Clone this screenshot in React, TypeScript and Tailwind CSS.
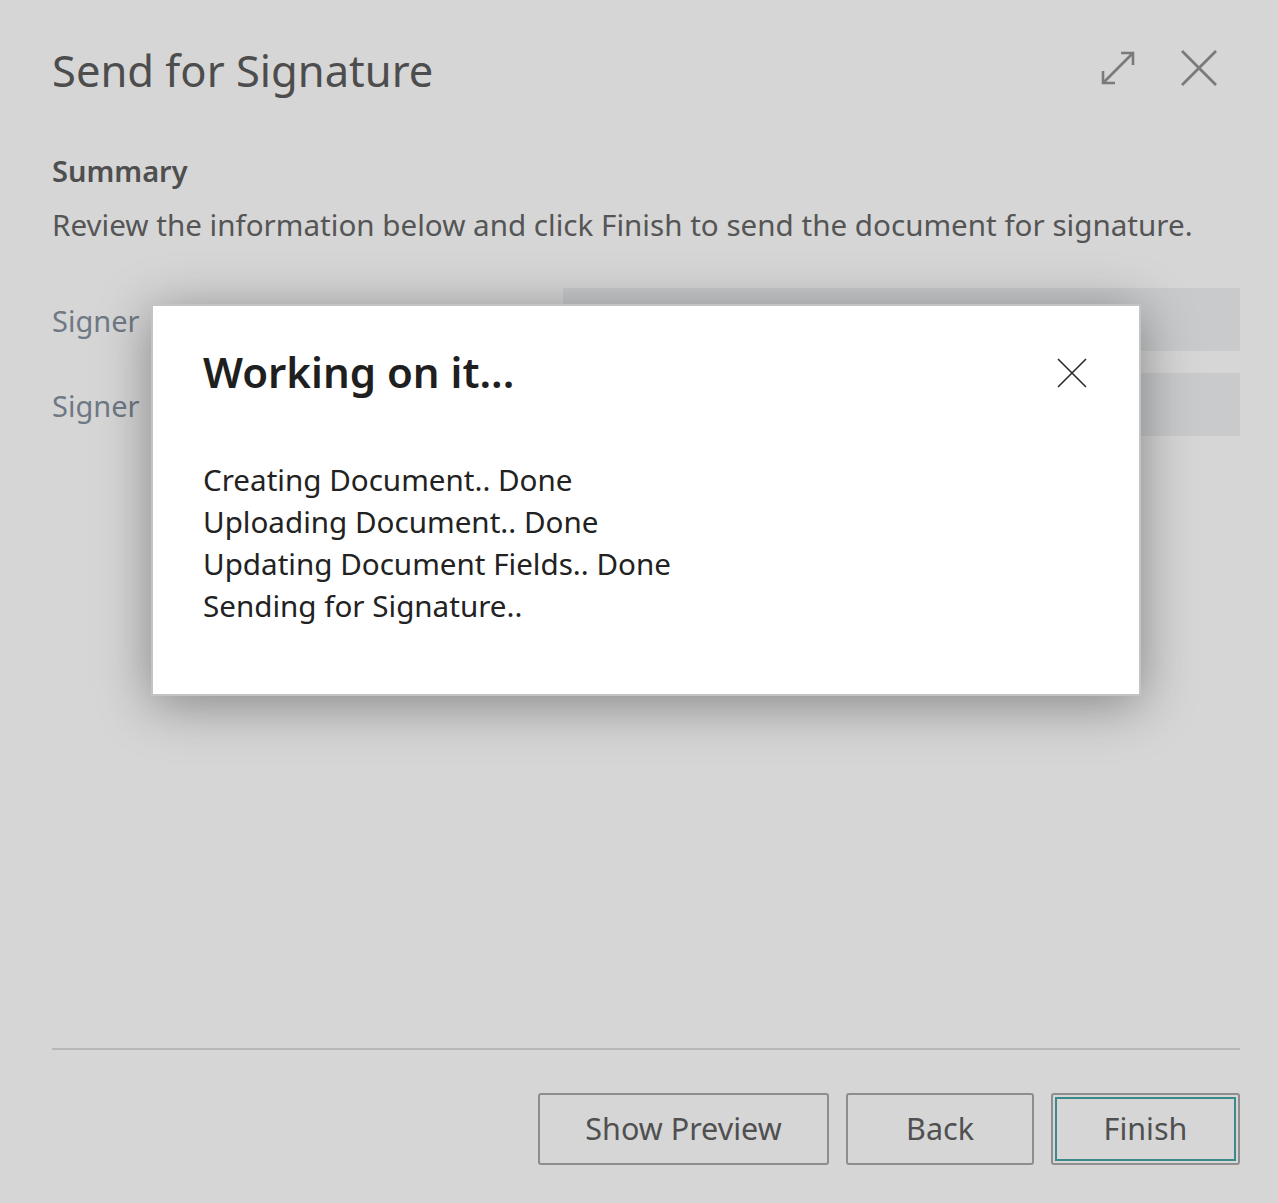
const font = { fontFamily: '"Noto Sans", "Open Sans", sans-serif' }

function ExpandIcon() {
  return (
    <svg width="34" height="34" viewBox="0 0 34 34" fill="none" stroke="#7a7a7a" strokeWidth="2.6" aria-hidden="true">
      <path d="M2 32 L32 2" />
      <path d="M20 2 H32 V14" />
      <path d="M2 20 V32 H14" />
    </svg>
  )
}

function CloseIcon({ size, color, width }: { size: number; color: string; width: number }) {
  return (
    <svg width={size} height={size} viewBox={`0 0 ${size} ${size}`} fill="none" stroke={color} strokeWidth={width} aria-hidden="true">
      <path d={`M1 1 L${size - 1} ${size - 1} M${size - 1} 1 L1 ${size - 1}`} />
    </svg>
  )
}

const steps = [
  'Creating Document.. Done',
  'Uploading Document.. Done',
  'Updating Document Fields.. Done',
  'Sending for Signature..',
]

export default function App() {
  return (
    <div className="relative flex h-[1203px] w-[1278px] flex-col bg-[#d6d6d6] pr-[38px] pl-[52px]" style={font}>
      <header className="flex items-center justify-between pt-[42px]">
        <h1 className="text-[43.5px] leading-[56px] text-[#4d4d4d]">Send for Signature</h1>
        <div className="-mt-[5px] flex items-center gap-[46px] pr-[23px]">
          <ExpandIcon />
          <CloseIcon size={36} color="#7a7a7a" width={2.8} />
        </div>
      </header>

      <section className="mt-[53px]">
        <h2 className="text-[29px] leading-[40px] font-semibold text-[#4f4f4f]">Summary</h2>
        <p className="mt-[14px] text-[29.6px] leading-[40px] text-[#555555]">
          Review the information below and click Finish to send the document for signature.
        </p>
      </section>

      <div className="mt-[43px] flex flex-col gap-[22px]">
        {[0, 1].map((i) => (
          <div key={i} className="flex items-center">
            <span className="w-[511px] pt-[3px] text-[29px] text-[#6f7985]">Signer</span>
            <div className="h-[63px] flex-1 bg-[#c9cacc]" />
          </div>
        ))}
      </div>

      <footer className="mt-auto border-t-2 border-[#b8b8b8] pt-[43px] pb-[38px]">
        <div className="flex justify-end gap-[17px]">
          <button className="h-[72px] w-[291px] rounded-[3px] border-2 border-[#8e8e8e] text-[30.5px] text-[#505050]">
            Show Preview
          </button>
          <button className="h-[72px] w-[188px] rounded-[3px] border-2 border-[#8e8e8e] text-[30.5px] text-[#505050]">
            Back
          </button>
          <button className="h-[72px] w-[189px] rounded-[3px] border-2 border-[#8e8e8e] p-[2px] text-[30.5px] text-[#505050]">
            <span className="flex h-full w-full items-center justify-center border-2 border-[#3b8a8a]">Finish</span>
          </button>
        </div>
      </footer>

      <div className="absolute top-[304px] left-[151px] flex h-[392px] w-[990px] flex-col border-2 border-[#c4c4c4] bg-white pt-[38px] pr-[52px] pl-[50px] shadow-[0_8px_50px_rgba(0,0,0,0.38)]">
        <div className="flex items-start justify-between">
          <h2 className="text-[42px] leading-[56px] font-semibold text-[#1f1f1f]">Working on it...</h2>
          <button className="mt-[14px]" aria-label="Close">
            <CloseIcon size={30} color="#2a2a2a" width={1.6} />
          </button>
        </div>
        <div className="mt-[59px] flex flex-col">
          {steps.map((s) => (
            <p key={s} className="text-[29.6px] leading-[42px] text-[#222222]">
              {s}
            </p>
          ))}
        </div>
      </div>
    </div>
  )
}
